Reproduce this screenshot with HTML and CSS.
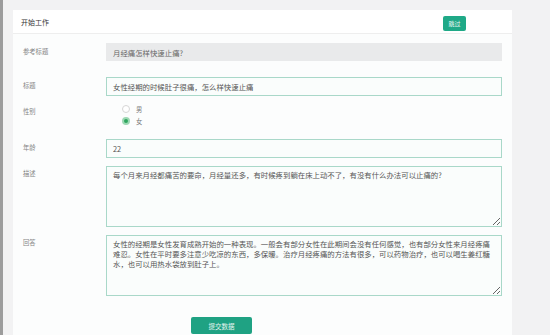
FILE: index.html
```html
<!DOCTYPE html>
<html lang="zh-CN">
<head>
    <meta charset="UTF-8">
    <title>开始工作</title>
    <link rel="stylesheet" href="styles.css">
</head>
<body>
    <div class="frame">
        <div class="card">
            <!-- шапка картки -->
            <div class="card-head">
                <div class="card-title">开始工作</div>
                <button class="btn-skip">跳过</button>
            </div>
            <div class="card-body">
                <div class="row">
                    <div class="label">参考标题</div>
                    <div class="field"><input class="input input-ref" type="text" value="月经痛怎样快速止痛?" readonly></div>
                </div>
                <div class="row row-title">
                    <div class="label">标题</div>
                    <div class="field"><input class="input" type="text" value="女性经期的时候肚子很痛，怎么样快速止痛"></div>
                </div>
                <div class="row row-sex">
                    <div class="label">性别</div>
                    <div class="field">
                        <div class="radio"><span class="dot"></span>男</div>
                        <div class="radio"><span class="dot checked"></span>女</div>
                    </div>
                </div>
                <div class="row row-age">
                    <div class="label">年龄</div>
                    <div class="field"><input class="input" type="text" value="22"></div>
                </div>
                <div class="row row-area">
                    <div class="label">描述</div>
                    <div class="field"><textarea class="textarea">每个月来月经都痛苦的要命，月经量还多，有时候疼到躺在床上动不了，有没有什么办法可以止痛的?</textarea></div>
                </div>
                <div class="row row-area">
                    <div class="label">回答</div>
                    <div class="field"><textarea class="textarea">女性的经期是女性发育成熟开始的一种表现。一般会有部分女性在此期间会没有任何感觉，也有部分女性来月经疼痛难忍。女性在平时要多注意少吃凉的东西，多保暖。治疗月经疼痛的方法有很多，可以药物治疗，也可以喝生姜红糖水，也可以用热水袋放到肚子上。</textarea></div>
                </div>
                <div class="submit-row">
                    <button class="btn-submit">提交数据</button>
                </div>
            </div>
        </div>
    </div>
</body>
</html>
```

FILE: styles.css
```css
body {
    margin: 0;
    padding: 0;
    background: #f2f2f3;
    font-family: "Noto Sans CJK SC", "Noto Sans", sans-serif;
    height: 335px;
    overflow: hidden;
}
.frame {
    border-left: 3px solid #9c9c9c;
    padding: 10px 0 0 10px;
    min-height: 335px;
    box-sizing: border-box;
}
.card {
    width: 499px;
    background: #fcfdfd;
}
.card-head {
    height: 23px;
    background: #FFFFFF;
    border-bottom: 1px solid #eeeeee;
    display: flex;
    align-items: center;
    justify-content: space-between;
    padding: 0 46px 0 8px;
}
.card-title {
    font-size: 7px;
    color: #333333;
}
.btn-skip {
    width: 23px;
    height: 15px;
    margin-top: 3px;
    padding: 0;
    border: none;
    border-radius: 2px;
    background: #1fa987;
    color: #e9f7f2;
    font-family: inherit;
    font-size: 6px;
}
.card-body {
    padding: 9px 10px 20px 10px;
}
.row {
    display: flex;
}
.row-title {
    margin-top: 16px;
}
.row-sex {
    margin-top: 7px;
}
.row-age {
    margin-top: 12px;
}
.row-area {
    margin-top: 8px;
}
.label {
    width: 83px;
    flex-shrink: 0;
    font-size: 6.3px;
    line-height: 18px;
    color: #858585;
}
.row-area .label {
    line-height: 16px;
}
.field {
    width: 396px;
}
.input {
    display: block;
    box-sizing: border-box;
    width: 100%;
    height: 19px;
    margin: 0;
    padding: 0 6px;
    border: 1px solid #a9d8c9;
    background: #fafdfc;
    font-family: inherit;
    font-size: 7.4px;
    color: #555555;
    outline: none;
}
.input-ref {
    height: 18px;
    border-color: #e9eaeb;
    background: #e9eaeb;
    color: #666666;
}
.textarea {
    display: block;
    box-sizing: border-box;
    width: 100%;
    height: 61px;
    margin: 0;
    padding: 3px 6px;
    border: 1px solid #a9d8c9;
    background: #fafdfc;
    font-family: inherit;
    font-size: 7.4px;
    line-height: 10px;
    color: #555555;
    outline: none;
}
.radio {
    display: flex;
    align-items: center;
    height: 12px;
    font-size: 6.3px;
    color: #777777;
}
.dot {
    width: 8px;
    height: 8px;
    box-sizing: border-box;
    border: 1px solid #d6d6d6;
    border-radius: 50%;
    background: #FFFFFF;
    margin: 0 6px 0 16px;
}
.dot.checked {
    border: 2px solid #9ed9b4;
    background: #2fa65f;
}
.submit-row {
    display: flex;
    margin-top: 21px;
    padding-left: 168px;
}
.btn-submit {
    width: 61px;
    height: 17px;
    padding: 0;
    border: none;
    border-radius: 2px;
    background: #1fa283;
    color: #e6f5f0;
    font-family: inherit;
    font-size: 6.5px;
}
```
